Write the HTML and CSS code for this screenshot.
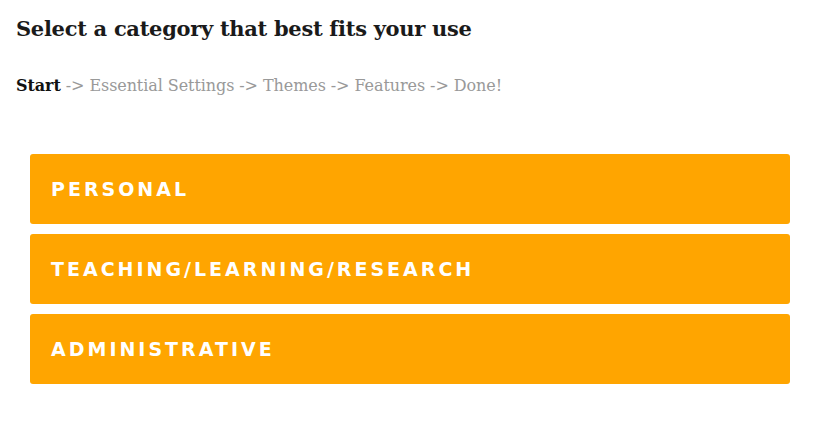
FILE: index.html
```html
<!DOCTYPE html>
<html>
<head>
<meta charset="utf-8">
<link rel="stylesheet" href="styles.css">
</head>
<body>
<div class="page">
  <h1 class="title">Select a category that best fits your use</h1>
  <p class="steps"><span class="current">Start</span> -&gt; Essential Settings -&gt; Themes -&gt; Features -&gt; Done!</p>
  <div class="options">
    <a class="option" href="#">PERSONAL</a>
    <a class="option" href="#">TEACHING/LEARNING/RESEARCH</a>
    <a class="option" href="#">ADMINISTRATIVE</a>
  </div>
</div>
</body>
</html>
```
FILE: styles.css
```css
html, body {
  margin: 0;
  padding: 0;
  background: #fff;
}
.page {
  padding: 14px 16px 0 16px;
}
.title {
  margin: 0;
  font-family: "DejaVu Serif", serif;
  font-weight: bold;
  font-size: 21px;
  line-height: 30px;
  color: #1a1a1a;
  letter-spacing: -0.3px;
}
.steps {
  margin: 30px 0 0 0;
  font-family: "DejaVu Serif", serif;
  font-size: 16px;
  line-height: 24px;
  color: #999;
  letter-spacing: -0.08px;
}
.current {
  color: #111;
  font-weight: bold;
}
.options {
  margin: 56px 18px 0 14px;
  display: flex;
  flex-direction: column;
  gap: 10px;
}
.option {
  display: flex;
  align-items: center;
  height: 70px;
  padding-left: 21px;
  background: #ffa500;
  border-radius: 3px;
  color: #fff;
  text-decoration: none;
  font-family: "DejaVu Sans", sans-serif;
  font-weight: bold;
  font-size: 19px;
  letter-spacing: 3px;
}
```
